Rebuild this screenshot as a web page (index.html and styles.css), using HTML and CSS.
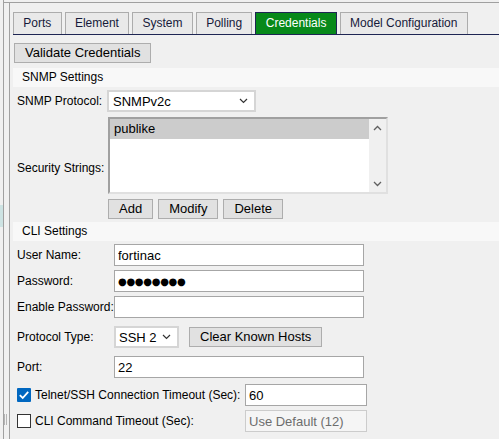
FILE: index.html
```html
<!DOCTYPE html>
<html lang="en">

<head>
  <meta charset="UTF-8" />
  <meta name="viewport" content="width=device-width, initial-scale=1.0" />
  <title>Credentials</title>
  <link rel="stylesheet" href="styles.css">
</head>

<body>
  <div class="edge"><div class="edge-mark"></div></div>

  <div class="main">
    <div class="splitter"><div class="grip"></div></div>

    <div class="panel">
      <div class="tabs">
        <div class="tab">Ports</div>
        <div class="tab">Element</div>
        <div class="tab">System</div>
        <div class="tab">Polling</div>
        <div class="tab active">Credentials</div>
        <div class="tab">Model Configuration</div>
      </div>

      <div class="pane">
        <div class="toolbar">
          <button class="btn">Validate Credentials</button>
        </div>

        <div class="section-title">SNMP Settings</div>

        <div class="row snmp-row">
          <label class="label snmp-label">SNMP Protocol:</label>
          <div class="combo combo-wide">
            <span>SNMPv2c</span>
            <svg width="9" height="6" viewBox="0 0 9 6"><polyline points="1,1 4.5,4.5 8,1" fill="none" stroke="#333" stroke-width="1.2" /></svg>
          </div>
        </div>

        <div class="row strings-row">
          <label class="label snmp-label">Security Strings:</label>
          <div class="strings">
            <div class="listbox">
              <div class="list-items">
                <div class="list-item selected">publike</div>
              </div>
              <div class="scrollbar">
                <svg width="9" height="6" viewBox="0 0 9 6"><polyline points="1,5 4.5,1.5 8,5" fill="none" stroke="#606060" stroke-width="1.3" /></svg>
                <svg width="9" height="6" viewBox="0 0 9 6"><polyline points="1,1 4.5,4.5 8,1" fill="none" stroke="#606060" stroke-width="1.3" /></svg>
              </div>
            </div>
            <div class="btn-row">
              <button class="btn">Add</button>
              <button class="btn">Modify</button>
              <button class="btn">Delete</button>
            </div>
          </div>
        </div>

        <div class="section-title cli-title">CLI Settings</div>

        <div class="row cli-row first">
          <label class="label cli-label">User Name:</label>
          <input class="field" type="text" value="fortinac" />
        </div>
        <div class="row cli-row">
          <label class="label cli-label">Password:</label>
          <input class="field pw" type="text" value="●●●●●●●●" />
        </div>
        <div class="row cli-row">
          <label class="label cli-label">Enable Password:</label>
          <input class="field" type="text" value="" />
        </div>
        <div class="row cli-row spaced">
          <label class="label cli-label">Protocol Type:</label>
          <div class="combo combo-small">
            <span>SSH 2</span>
            <svg width="9" height="6" viewBox="0 0 9 6"><polyline points="1,1 4.5,4.5 8,1" fill="none" stroke="#333" stroke-width="1.2" /></svg>
          </div>
          <button class="btn clear-btn">Clear Known Hosts</button>
        </div>
        <div class="row cli-row spaced">
          <label class="label cli-label">Port:</label>
          <input class="field" type="text" value="22" />
        </div>
        <div class="row cli-row timeout-row">
          <label class="check-label">
            <span class="check checked">
              <svg width="14" height="14" viewBox="0 0 14 14"><polyline points="2.8,7.2 5.7,10 11.2,3.8" fill="none" stroke="#fff" stroke-width="1.8" /></svg>
            </span>
            Telnet/SSH Connection Timeout (Sec):
          </label>
          <input class="field short" type="text" value="60" />
        </div>
        <div class="row cli-row">
          <label class="check-label">
            <span class="check"></span>
            CLI Command Timeout (Sec):
          </label>
          <input class="field short" type="text" value="Use Default (12)" disabled />
        </div>
      </div>
    </div>
  </div>
</body>

</html>
```

FILE: styles.css
```css
* {
  margin: 0;
  padding: 0;
  box-sizing: border-box;
}

body {
  display: flex;
  height: 439px;
  overflow: hidden;
  background-color: #f0f0f0;
  color: #000;
  font-family: 'Liberation Sans', Arial, sans-serif;
  font-size: 12px;
}

.edge {
  width: 4px;
  flex: none;
  border-right: 1px solid #a0a0a0;
}

.edge-mark {
  width: 3px;
  height: 22px;
  margin-top: 205px;
  background-color: #cde3e3;
}

.main {
  flex: 1;
  display: flex;
  margin-top: 2px;
  border-top: 1px solid #a0a0a0;
}

.splitter {
  width: 5px;
  flex: none;
}

.grip {
  width: 3px;
  height: 11px;
  margin-top: 411px;
  border-left: 1px solid #b4b4b4;
  border-right: 1px solid #b4b4b4;
}

.panel {
  flex: 1;
  border-left: 1px solid #a0a0a0;
  padding: 9px 0 0 3px;
}

/* tabs */
.tabs {
  display: flex;
  gap: 3px;
  height: 23px;
  border-bottom: 1px solid #1e2553;
}

.tab {
  height: 22px;
  line-height: 21px;
  padding: 0 9.3px;
  border: 1px solid #acacac;
  border-bottom: none;
  background-color: #e9e9e9;
  color: #161a3a;
  white-space: nowrap;
}

.tab.active {
  background-color: #07891a;
  border-color: #1e2553;
  color: #fff;
}

/* content */
.pane {
  padding-top: 8px;
}

.toolbar {
  padding-left: 1px;
}

.btn {
  height: 20px;
  padding: 0 10px;
  border: 1px solid #adadad;
  background-color: #e1e1e1;
  color: #000;
  font-family: 'Liberation Sans', Arial, sans-serif;
  font-size: 13px;
  line-height: 18px;
}

.section-title {
  height: 19px;
  margin-top: 5px;
  padding-left: 9px;
  line-height: 19px;
  background-color: #f8f8f8;
}

.cli-title {
  margin-top: 3px;
}

.row {
  display: flex;
  align-items: center;
  padding-left: 4px;
}

.label {
  flex: none;
  white-space: nowrap;
}

.snmp-label {
  width: 91px;
}

.cli-label {
  width: 97px;
}

.snmp-row {
  margin-top: 3px;
}

.strings-row {
  margin-top: 5px;
}

.combo {
  display: flex;
  align-items: center;
  justify-content: space-between;
  height: 22px;
  padding: 0 6px 0 4px;
  border: 2px solid #d5d5d5;
  background-color: #fff;
  font-size: 13px;
}

.combo-wide {
  width: 149px;
  margin-left: -1px;
}

.combo-small {
  width: 65px;
  padding-left: 3px;
}

.listbox {
  display: flex;
  width: 280px;
  height: 77px;
  border: 2px solid;
  border-color: #a0a0a0 #e0e0e0 #e0e0e0 #a0a0a0;
  background-color: #fff;
}

.list-items {
  flex: 1;
}

.list-item {
  height: 20px;
  padding-left: 4px;
  line-height: 20px;
  font-size: 13px;
}

.list-item.selected {
  background-color: #cccccc;
}

.scrollbar {
  width: 17px;
  display: flex;
  flex-direction: column;
  justify-content: space-between;
  align-items: center;
  padding: 6px 0 5px;
  background-color: #f0f0f0;
}

.btn-row {
  display: flex;
  gap: 5px;
  margin-top: 5px;
}

.cli-row {
  margin-top: 4px;
}

.cli-row.first {
  margin-top: 3px;
}

.cli-row.spaced {
  margin-top: 8px;
}

.cli-row.timeout-row {
  margin-top: 6px;
}

.field {
  width: 250px;
  height: 22px;
  padding: 0 3px;
  border: 1px solid #a6a6a6;
  background-color: #fff;
  color: #000;
  font-family: 'Liberation Sans', Arial, sans-serif;
  font-size: 13px;
  outline: none;
}

.field.pw {
  font-family: 'DejaVu Sans', sans-serif;
  font-size: 10px;
  letter-spacing: -0.3px;
}

.field.short {
  width: 122px;
}

.field:disabled {
  border-color: #cccccc;
  background-color: #f5f5f5;
  color: #6d6d6d;
}

.clear-btn {
  margin-left: 10px;
}

.check-label {
  display: flex;
  align-items: center;
  gap: 4px;
  width: 228px;
  flex: none;
  white-space: nowrap;
}

.check {
  width: 14px;
  height: 14px;
  border: 1px solid #333;
  background-color: #fff;
  flex: none;
}

.check.checked {
  border: none;
  border-radius: 1px;
  background-color: #0067c0;
}

.check svg {
  display: block;
}
```
